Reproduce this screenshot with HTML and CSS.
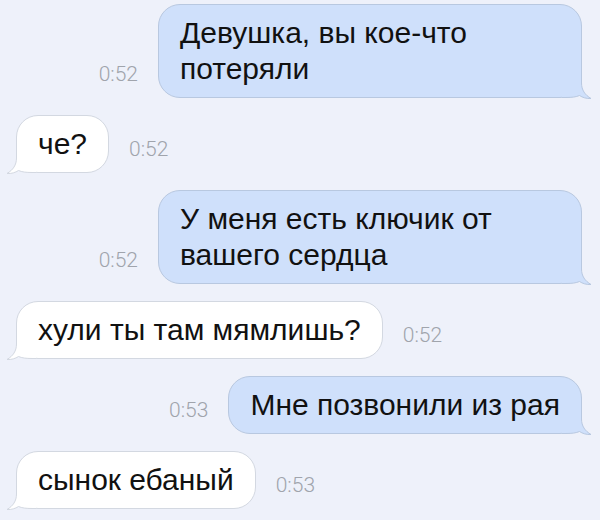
FILE: index.html
```html
<!DOCTYPE html>
<html lang="ru">

<head>
  <meta charset="UTF-8">
  <meta name="viewport" content="width=device-width, initial-scale=1.0">
  <title>Сообщения</title>
  <link rel="stylesheet" href="styles.css">
</head>

<body>
  <div class="chat">
    <div class="row out">
      <span class="time">0:52</span>
      <div class="bubble">
        <svg class="tail" width="30" height="24" viewBox="0 0 30 24">
          <path class="tail-fill" d="M19.5,0 L19.5,8 C19.5,15 23,20 29,23.5 C24.5,23.8 20.5,22.5 17.5,20.5 C14,22 10,22.5 4,22.5 L0,22.5 L0,0 Z" />
          <path class="tail-line" d="M19.5,0 L19.5,8 C19.5,15 23,20 29,23.5 C24.5,23.8 20.5,22.5 17.5,20.5 C14,22 10,22.5 4,22.5 L0,22.5" />
        </svg>
        <span class="text">Девушка, вы кое-что потеряли</span>
      </div>
    </div>

    <div class="row in">
      <div class="bubble">
        <svg class="tail" width="30" height="24" viewBox="0 0 30 24">
          <path class="tail-fill" d="M19.5,0 L19.5,8 C19.5,15 23,20 29,23.5 C24.5,23.8 20.5,22.5 17.5,20.5 C14,22 10,22.5 4,22.5 L0,22.5 L0,0 Z" />
          <path class="tail-line" d="M19.5,0 L19.5,8 C19.5,15 23,20 29,23.5 C24.5,23.8 20.5,22.5 17.5,20.5 C14,22 10,22.5 4,22.5 L0,22.5" />
        </svg>
        <span class="text">че?</span>
      </div>
      <span class="time">0:52</span>
    </div>

    <div class="row out">
      <span class="time">0:52</span>
      <div class="bubble">
        <svg class="tail" width="30" height="24" viewBox="0 0 30 24">
          <path class="tail-fill" d="M19.5,0 L19.5,8 C19.5,15 23,20 29,23.5 C24.5,23.8 20.5,22.5 17.5,20.5 C14,22 10,22.5 4,22.5 L0,22.5 L0,0 Z" />
          <path class="tail-line" d="M19.5,0 L19.5,8 C19.5,15 23,20 29,23.5 C24.5,23.8 20.5,22.5 17.5,20.5 C14,22 10,22.5 4,22.5 L0,22.5" />
        </svg>
        <span class="text">У меня есть ключик от вашего сердца</span>
      </div>
    </div>

    <div class="row in">
      <div class="bubble">
        <svg class="tail" width="30" height="24" viewBox="0 0 30 24">
          <path class="tail-fill" d="M19.5,0 L19.5,8 C19.5,15 23,20 29,23.5 C24.5,23.8 20.5,22.5 17.5,20.5 C14,22 10,22.5 4,22.5 L0,22.5 L0,0 Z" />
          <path class="tail-line" d="M19.5,0 L19.5,8 C19.5,15 23,20 29,23.5 C24.5,23.8 20.5,22.5 17.5,20.5 C14,22 10,22.5 4,22.5 L0,22.5" />
        </svg>
        <span class="text">хули ты там мямлишь?</span>
      </div>
      <span class="time">0:52</span>
    </div>

    <div class="row out">
      <span class="time">0:53</span>
      <div class="bubble">
        <svg class="tail" width="30" height="24" viewBox="0 0 30 24">
          <path class="tail-fill" d="M19.5,0 L19.5,8 C19.5,15 23,20 29,23.5 C24.5,23.8 20.5,22.5 17.5,20.5 C14,22 10,22.5 4,22.5 L0,22.5 L0,0 Z" />
          <path class="tail-line" d="M19.5,0 L19.5,8 C19.5,15 23,20 29,23.5 C24.5,23.8 20.5,22.5 17.5,20.5 C14,22 10,22.5 4,22.5 L0,22.5" />
        </svg>
        <span class="text">Мне позвонили из рая</span>
      </div>
    </div>

    <div class="row in">
      <div class="bubble">
        <svg class="tail" width="30" height="24" viewBox="0 0 30 24">
          <path class="tail-fill" d="M19.5,0 L19.5,8 C19.5,15 23,20 29,23.5 C24.5,23.8 20.5,22.5 17.5,20.5 C14,22 10,22.5 4,22.5 L0,22.5 L0,0 Z" />
          <path class="tail-line" d="M19.5,0 L19.5,8 C19.5,15 23,20 29,23.5 C24.5,23.8 20.5,22.5 17.5,20.5 C14,22 10,22.5 4,22.5 L0,22.5" />
        </svg>
        <span class="text">сынок ебаный</span>
      </div>
      <span class="time">0:53</span>
    </div>
  </div>
</body>

</html>
```

FILE: styles.css
```css
* {
  margin: 0;
  padding: 0;
  box-sizing: border-box;
}

body {
  font-family: 'Liberation Sans', Arial, sans-serif;
  background: #eef1fa;
  color: #111111;
  width: 600px;
  height: 520px;
  overflow: hidden;
}

.chat {
  display: flex;
  flex-direction: column;
  gap: 17px;
  padding: 4px 18px 0 16px;
}

.row {
  display: flex;
  align-items: flex-end;
  gap: 20px;
}

.row.out {
  justify-content: flex-end;
}

.bubble {
  position: relative;
  max-width: 424px;
  padding: 10px 21px;
  font-size: 30px;
  line-height: 36px;
  border-radius: 22px;
  border: 1px solid #d3d8e1;
  background: #ffffff;
}

.row.out .bubble {
  background: #cfe0fb;
  border-color: #b8c8e0;
}

.text {
  position: relative;
}

.tail {
  position: absolute;
  right: -11px;
  bottom: -2px;
  overflow: visible;
}

.row.in .tail {
  right: auto;
  left: -11px;
  transform: scaleX(-1);
}

.tail-fill {
  fill: #ffffff;
}

.tail-line {
  fill: none;
  stroke: #d3d8e1;
  stroke-width: 1;
}

.row.out .tail-fill {
  fill: #cfe0fb;
}

.row.out .tail-line {
  stroke: #b8c8e0;
}

.time {
  font-family: Roboto, 'Liberation Sans', sans-serif;
  font-weight: 300;
  font-size: 21px;
  line-height: 24px;
  color: #a0a4ac;
  margin-bottom: 12px;
}
```
